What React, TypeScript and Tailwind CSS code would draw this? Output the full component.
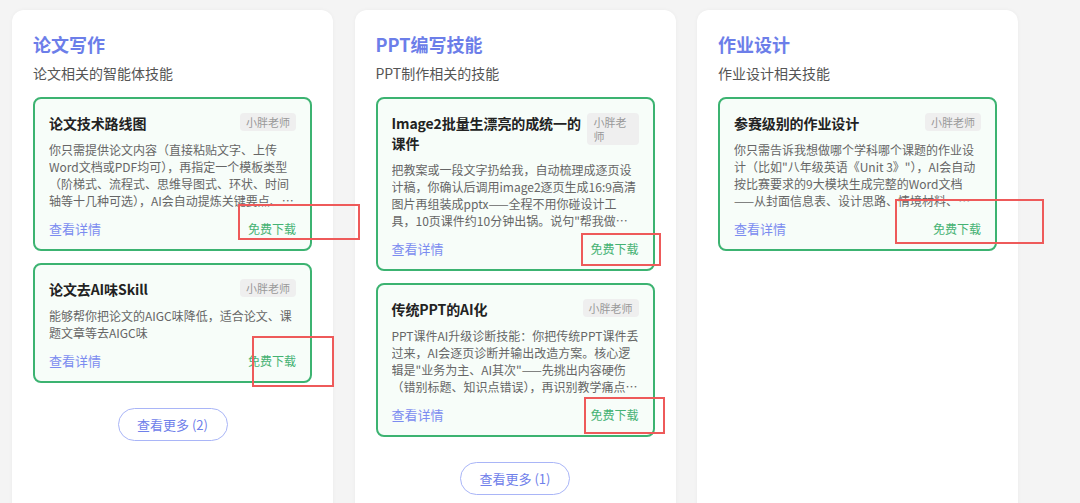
import React from "react";

type Skill = { title: string; desc: string };
type Section = { title: string; sub: string; skills: Skill[]; more?: number };

const sections: Section[] = [
  {
    title: "论文写作",
    sub: "论文相关的智能体技能",
    more: 2,
    skills: [
      {
        title: "论文技术路线图",
        desc: "你只需提供论文内容（直接粘贴文字、上传Word文档或PDF均可），再指定一个模板类型（阶梯式、流程式、思维导图式、环状、时间轴等十几种可选），AI会自动提炼关键要点、生成一张清晰美观的技术路线图。",
      },
      {
        title: "论文去AI味Skill",
        desc: "能够帮你把论文的AIGC味降低，适合论文、课题文章等去AIGC味",
      },
    ],
  },
  {
    title: "PPT编写技能",
    sub: "PPT制作相关的技能",
    more: 1,
    skills: [
      {
        title: "Image2批量生漂亮的成统一的课件",
        desc: '把教案或一段文字扔给我，自动梳理成逐页设计稿，你确认后调用image2逐页生成16:9高清图片再组装成pptx——全程不用你碰设计工具，10页课件约10分钟出锅。说句"帮我做一份课件"即可开始。',
      },
      {
        title: "传统PPT的AI化",
        desc: 'PPT课件AI升级诊断技能：你把传统PPT课件丢过来，AI会逐页诊断并输出改造方案。核心逻辑是"业务为主、AI其次"——先挑出内容硬伤（错别标题、知识点错误），再识别教学痛点并给出改造建议。',
      },
    ],
  },
  {
    title: "作业设计",
    sub: "作业设计相关技能",
    skills: [
      {
        title: "参赛级别的作业设计",
        desc: '你只需告诉我想做哪个学科哪个课题的作业设计（比如"八年级英语《Unit 3》"），AI会自动按比赛要求的9大模块生成完整的Word文档——从封面信息表、设计思路、情境材料、作业内容到评价量表一应俱全。',
      },
    ],
  },
];

function Card({ s }: { s: Skill }) {
  return (
    <div className="rounded-[8px] border-2 border-[#3cb371] bg-[#f7fdf9] px-[14px] pt-[14px] pb-[12px]">
      <div className="flex items-start gap-[3px]">
        <div className="text-[14px] leading-[20px] font-bold tracking-[-0.1px] text-[#222222]">{s.title}</div>
        <div className="ml-auto rounded-[4px] bg-[#efefef] px-[6px] py-[2px] text-[11px] leading-[14px] text-[#999999]">
          小胖老师
        </div>
      </div>
      <p className="mt-[8px] line-clamp-4 text-[12px] leading-[17px] text-[#666666]">{s.desc}</p>
      <div className="mt-[12px] flex h-[16px] items-center justify-between">
        <span className="text-[13px] leading-[16px] text-[#7b8cf0]">查看详情</span>
        <span className="text-[12px] leading-[16px] text-[#45b273]">免费下载</span>
      </div>
    </div>
  );
}

function Panel({ sec }: { sec: Section }) {
  return (
    <div className="rounded-[12px] bg-white px-[21px] pt-[20px] pb-[40px] shadow-[0_0_4px_rgba(0,0,0,0.04)]">
      <div className="text-[18px] leading-[28px] font-bold text-[#6c7ee9]">{sec.title}</div>
      <div className="mt-[5px] text-[14px] leading-[20px] text-[#555555]">{sec.sub}</div>
      <div className="mt-[14px] flex flex-col gap-[12px]">
        {sec.skills.map((s) => (
          <Card key={s.title} s={s} />
        ))}
      </div>
      {sec.more ? (
        <div className="mt-[25px] flex justify-center">
          <div className="flex h-[33px] w-[110px] items-center justify-center rounded-full border border-[#a9b5f7] text-[13px] text-[#6f80ea]">
            查看更多 ({sec.more})
          </div>
        </div>
      ) : null}
    </div>
  );
}

const boxes = [
  "left-[238px] top-[204px] w-[122px] h-[36px]",
  "left-[252px] top-[336px] w-[82px] h-[51px]",
  "left-[581px] top-[233px] w-[80px] h-[33px]",
  "left-[584px] top-[397px] w-[81px] h-[37px]",
  "left-[895px] top-[199px] w-[149px] h-[45px]",
];

export default function App() {
  return (
    <div
      className="relative min-h-[503px] overflow-hidden bg-[#f4f4f4] pl-[12px] pt-[10px]"
      style={{ fontFamily: '"Noto Sans CJK SC", "Noto Sans", sans-serif' }}
    >
      <div className="grid grid-cols-[321px_321px_321px] gap-x-[21.5px]">
        {sections.map((sec) => (
          <Panel key={sec.title} sec={sec} />
        ))}
      </div>
      {boxes.map((b, i) => (
        <div key={i} className={`pointer-events-none absolute border-2 border-[#ee5a5a] ${b}`} />
      ))}
    </div>
  );
}
